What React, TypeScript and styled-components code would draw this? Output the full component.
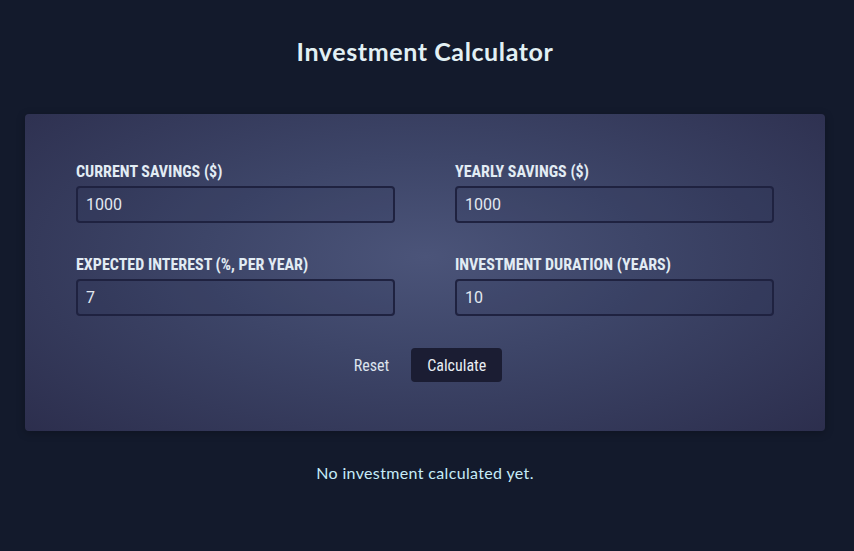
import React from "react";
import styled, { createGlobalStyle } from "styled-components";

const Global = createGlobalStyle`
  html, body { margin: 0; padding: 0; }
  body {
    background: #131a2c;
    color: #c2e9e0;
    font-family: "Lato", "Noto Sans", sans-serif;
    width: 854px;
    height: 551px;
    overflow: hidden;
  }
`;

const Page = styled.div`
  box-sizing: border-box;
  width: 854px;
  display: flex;
  flex-direction: column;
  align-items: center;
  padding: 36px 4px 0 0;
`;

const Title = styled.h1`
  margin: 0;
  font-family: "Lato", "Noto Sans", sans-serif;
  font-size: 25px;
  font-weight: 700;
  line-height: 30px;
  color: #e2f0f4;
  letter-spacing: 0.6px;
`;

const Card = styled.section`
  box-sizing: border-box;
  width: 800px;
  margin-top: 48px;
  padding: 48px 51px 49px;
  border-radius: 4px;
  background: radial-gradient(ellipse 70% 80% at 50% 45%, #4b5479 0%, #3d4568 40%, #2c2e4d 100%);
  box-shadow: 0 2px 8px rgba(0, 0, 0, 0.25);
`;

const Grid = styled.div`
  display: grid;
  grid-template-columns: 1fr 1fr;
  column-gap: 60px;
  row-gap: 32px;
`;

const Field = styled.div`
  display: flex;
  flex-direction: column;
`;

const Label = styled.label`
  font-family: "Roboto", "Liberation Sans", sans-serif;
  font-stretch: condensed;
  font-weight: 700;
  font-size: 16px;
  line-height: 19px;
  text-transform: uppercase;
  color: #e2ecf4;
  margin-bottom: 5px;
`;

const Input = styled.input`
  box-sizing: border-box;
  height: 37px;
  width: 100%;
  padding: 0 8px;
  border: 2px solid #1f2240;
  border-radius: 4px;
  background: rgba(40, 44, 80, 0.15);
  color: #e2e8f0;
  font-family: "Roboto", "Liberation Sans", sans-serif;
  font-size: 16px;
  outline: none;
`;

const Actions = styled.div`
  display: flex;
  justify-content: center;
  align-items: center;
  gap: 16px;
  margin-top: 32px;
`;

const Button = styled.button<{ $primary?: boolean }>`
  height: 34px;
  padding: ${(p) => (p.$primary ? "0 16px" : "0 6px")};
  border: none;
  border-radius: 4px;
  background: ${(p) => (p.$primary ? "#1b1d33" : "transparent")};
  color: ${(p) => (p.$primary ? "#e8eef4" : "#dde4ee")};
  font-family: "Roboto", "Liberation Sans", sans-serif;
  font-stretch: condensed;
  font-size: 16px;
  font-weight: 400;
  cursor: pointer;
`;

const Note = styled.p`
  margin: 32px 0 0;
  font-size: 16px;
  letter-spacing: 0.35px;
  color: #c6ecf8;
  text-align: center;
`;

export default function App() {
  return (
    <>
      <Global />
      <Page>
        <Title>Investment Calculator</Title>
        <Card>
          <Grid>
            <Field>
              <Label>Current Savings ($)</Label>
              <Input type="number" defaultValue={1000} />
            </Field>
            <Field>
              <Label>Yearly Savings ($)</Label>
              <Input type="number" defaultValue={1000} />
            </Field>
            <Field>
              <Label>Expected Interest (%, per year)</Label>
              <Input type="number" defaultValue={7} />
            </Field>
            <Field>
              <Label>Investment Duration (years)</Label>
              <Input type="number" defaultValue={10} />
            </Field>
          </Grid>
          <Actions>
            <Button type="reset">Reset</Button>
            <Button type="submit" $primary>
              Calculate
            </Button>
          </Actions>
        </Card>
        <Note>No investment calculated yet.</Note>
      </Page>
    </>
  );
}
